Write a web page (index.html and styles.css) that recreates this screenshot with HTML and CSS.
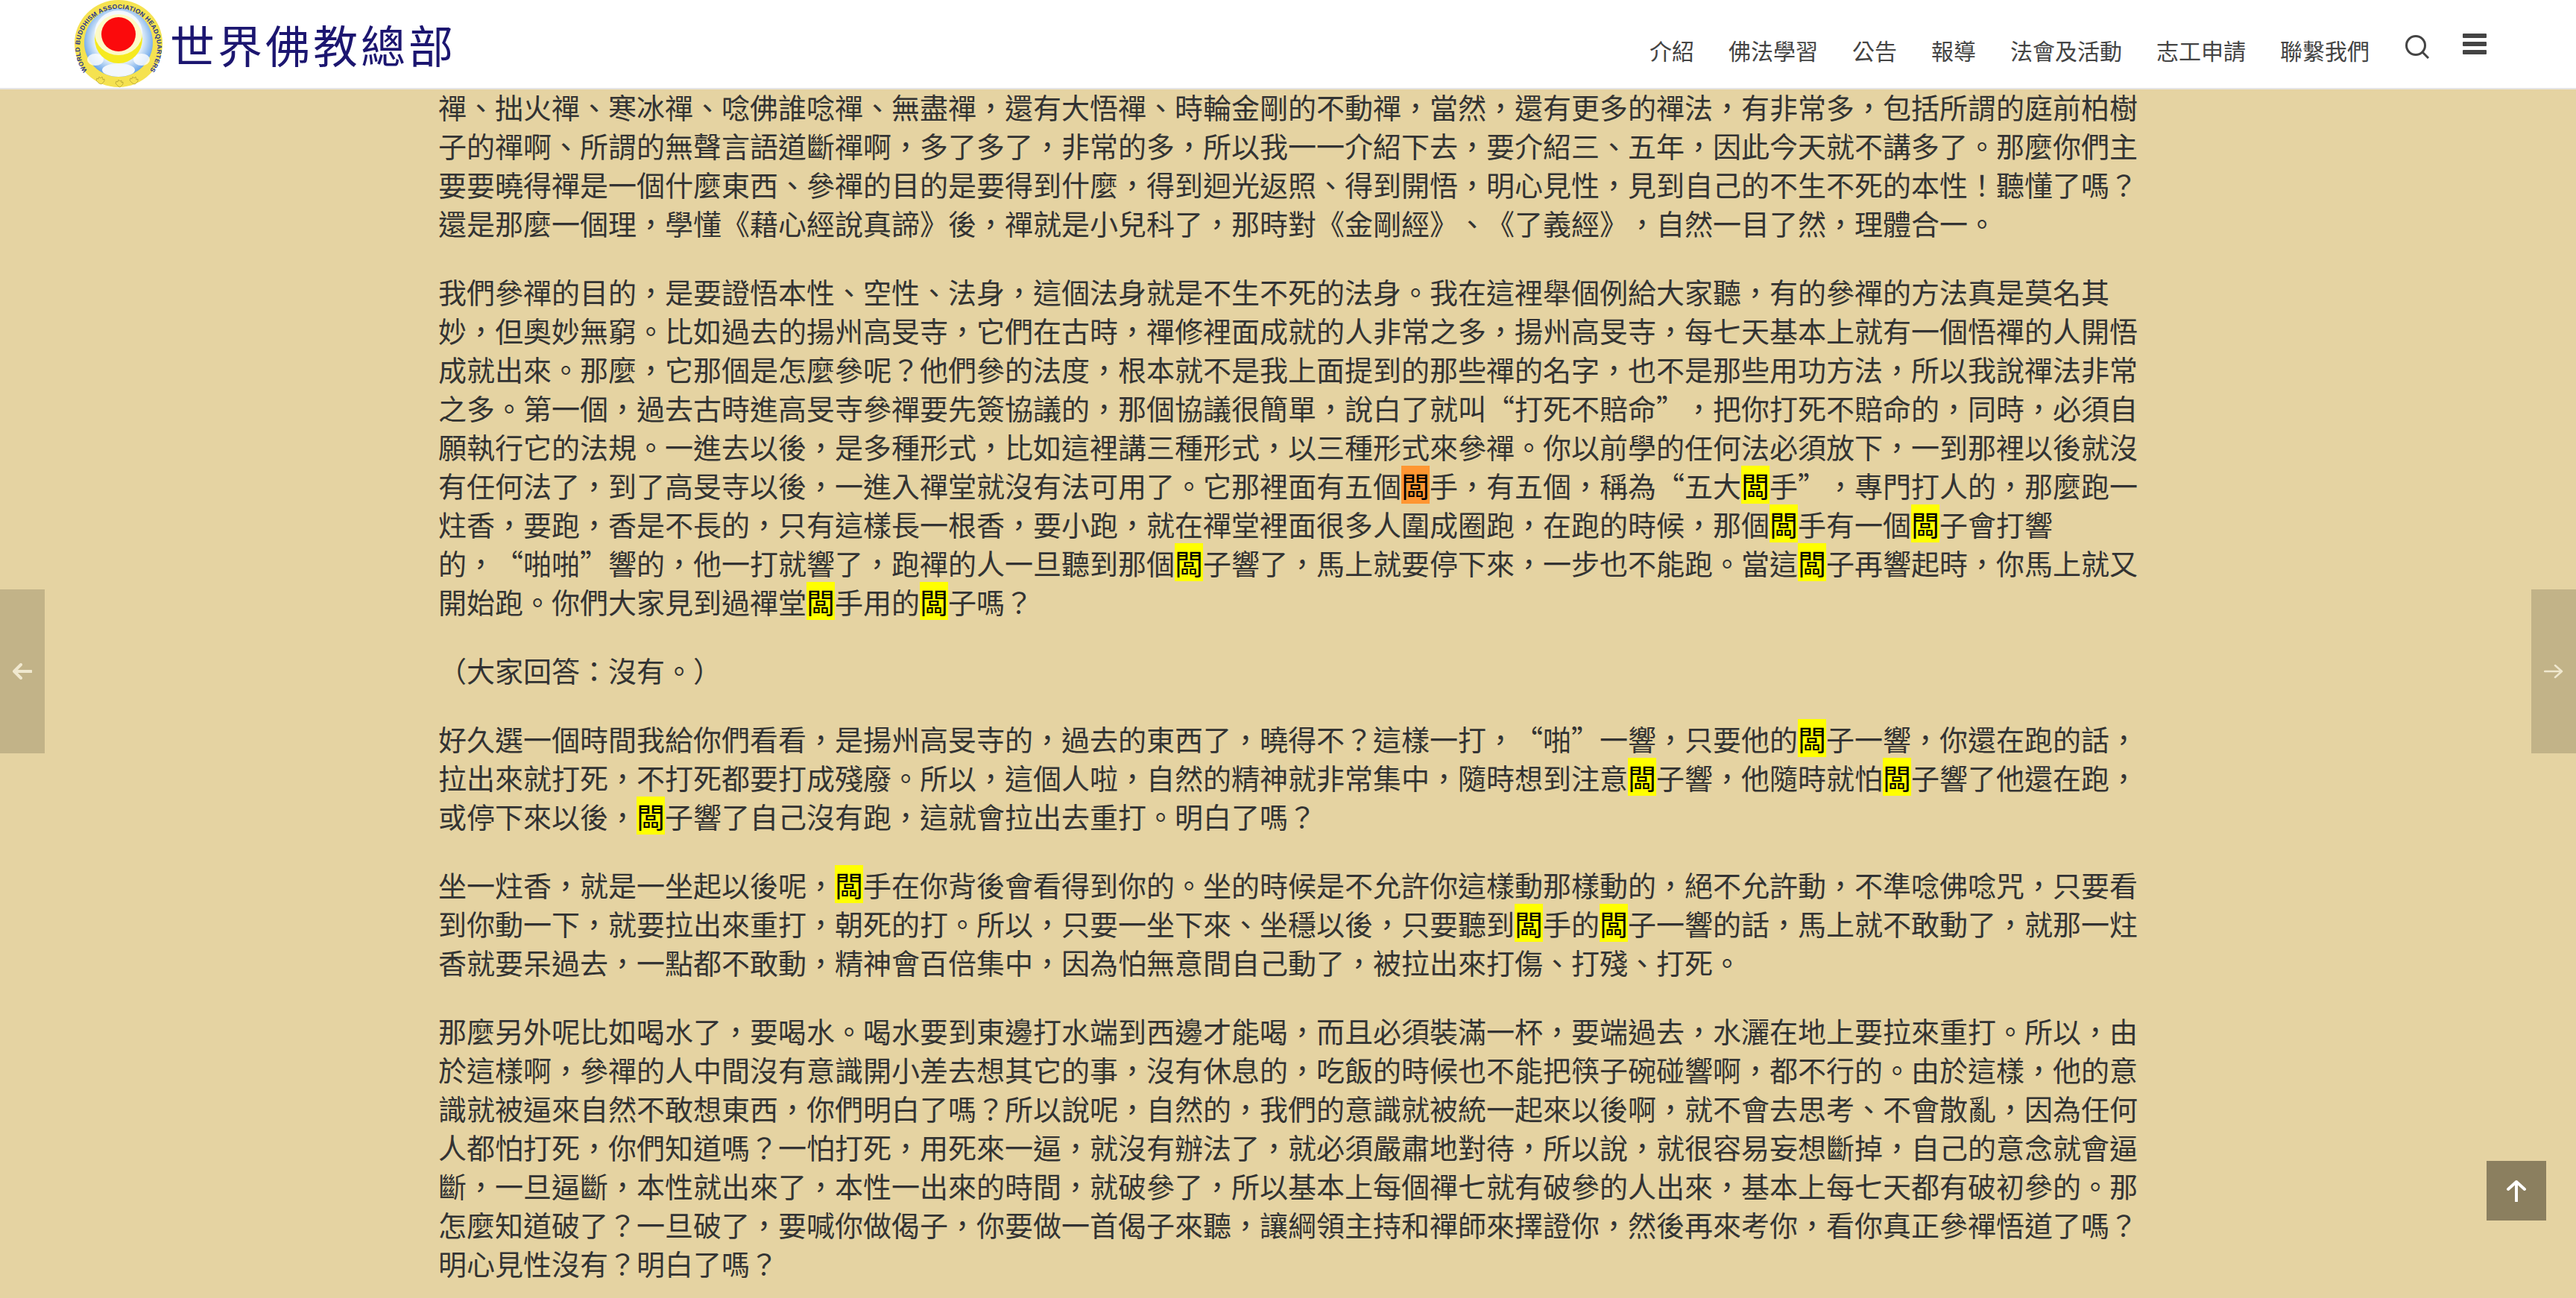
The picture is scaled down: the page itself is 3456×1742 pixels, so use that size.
FILE: index.html
```html
<!DOCTYPE html>
<html lang="zh-Hant">
<head>
    <meta charset="UTF-8">
    <meta name="viewport" content="width=device-width, initial-scale=1.0">
    <title>世界佛教總部</title>
    <link rel="stylesheet" href="styles.css">
</head>
<body>
    <header class="site-header">
        <a href="#" class="brand">
            <svg class="brand-logo" viewBox="0 0 118 118" width="118" height="118">
                <defs>
                    <radialGradient id="skyGlow" cx="50%" cy="45%" r="55%">
                        <stop offset="0%" stop-color="#ffffff"/>
                        <stop offset="62%" stop-color="#e8f2fb"/>
                        <stop offset="100%" stop-color="#5f9fe8"/>
                    </radialGradient>
                    <path id="ringPath" d="M19 97 A52 52 0 1 1 99 97"/>
                </defs>
                <ellipse cx="59" cy="58.5" rx="59" ry="58.5" fill="#f5e250"/>
                <ellipse cx="59" cy="57" rx="46" ry="46" fill="url(#skyGlow)"/>
                <ellipse cx="28" cy="80" rx="11" ry="8" fill="#ffffff" opacity="0.8"/>
                <ellipse cx="90" cy="80" rx="11" ry="8" fill="#ffffff" opacity="0.8"/>
                <ellipse cx="59" cy="94" rx="22" ry="9" fill="#f2f7fd"/>
                <ellipse cx="59" cy="52" rx="32" ry="33" fill="#f6ea1f"/>
                <ellipse cx="59" cy="44" rx="32" ry="30" fill="#ffffff" opacity="0.75"/>
                <ellipse cx="59" cy="46" rx="23" ry="23" fill="#fb0a0c"/>
                <text class="ring-text"><textPath href="#ringPath" startOffset="50%" text-anchor="middle">WORLD BUDDHISM ASSOCIATION HEADQUARTERS</textPath></text>
                <g class="ring-leaves">
                    <path d="M33 112l-4-4 1-3 2 1 1-3 2 2 2-2 1 4 2-1 0 3-4 4z"/>
                    <path d="M59 116l-4-4 1-3 2 1 1-3 2 2 2-1 0 3 2-1 0 3-4 4z"/>
                    <path d="M78 112l-4-4 1-3 2 1 1-3 2 2 2-2 1 4 2-1 0 3-4 4z"/>
                </g>
            </svg>
            <span class="brand-name">世界佛教總部</span>
        </a>
        <nav class="main-nav">
            <a href="#">介紹</a>
            <a href="#">佛法學習</a>
            <a href="#">公告</a>
            <a href="#">報導</a>
            <a href="#">法會及活動</a>
            <a href="#">志工申請</a>
            <a href="#">聯繫我們</a>
        </nav>
        <svg class="search-icon" viewBox="0 0 34 32" width="34" height="32">
            <circle cx="15" cy="14" r="12.5"/>
            <path d="M24 23l8 8"/>
        </svg>
        <div class="menu-icon"><span></span><span></span><span></span></div>
    </header>

    <main class="article">
        <p>禪、拙火禪、寒冰禪、唸佛誰唸禪、無盡禪，還有大悟禪、時輪金剛的不動禪，當然，還有更多的禪法，有非常多，包括所謂的庭前柏樹子的禪啊、所謂的無聲言語道斷禪啊，多了多了，非常的多，所以我一一介紹下去，要介紹三、五年，因此今天就不講多了。那麼你們主要要曉得禪是一個什麼東西、參禪的目的是要得到什麼，得到迴光返照、得到開悟，明心見性，見到自己的不生不死的本性！聽懂了嗎？還是那麼一個理，學懂《藉心經說真諦》後，禪就是小兒科了，那時對《金剛經》、《了義經》，自然一目了然，理體合一。</p>
        <p>我們參禪的目的，是要證悟本性、空性、法身，這個法身就是不生不死的法身。我在這裡舉個例給大家聽，有的參禪的方法真是莫名其妙，但奧妙無窮。比如過去的揚州高旻寺，它們在古時，禪修裡面成就的人非常之多，揚州高旻寺，每七天基本上就有一個悟禪的人開悟成就出來。那麼，它那個是怎麼參呢？他們參的法度，根本就不是我上面提到的那些禪的名字，也不是那些用功方法，所以我說禪法非常之多。第一個，過去古時進高旻寺參禪要先簽協議的，那個協議很簡單，說白了就叫“打死不賠命”，把你打死不賠命的，同時，必須自願執行它的法規。一進去以後，是多種形式，比如這裡講三種形式，以三種形式來參禪。你以前學的任何法必須放下，一到那裡以後就沒有任何法了，到了高旻寺以後，一進入禪堂就沒有法可用了。它那裡面有五個<mark class="current">闆</mark>手，有五個，稱為“五大<mark>闆</mark>手”，專門打人的，那麼跑一炷香，要跑，香是不長的，只有這樣長一根香，要小跑，就在禪堂裡面很多人圍成圈跑，在跑的時候，那個<mark>闆</mark>手有一個<mark>闆</mark>子會打響<br>的，“啪啪”響的，他一打就響了，跑禪的人一旦聽到那個<mark>闆</mark>子響了，馬上就要停下來，一步也不能跑。當這<mark>闆</mark>子再響起時，你馬上就又開始跑。你們大家見到過禪堂<mark>闆</mark>手用的<mark>闆</mark>子嗎？</p>
        <p>（大家回答：沒有。）</p>
        <p>好久選一個時間我給你們看看，是揚州高旻寺的，過去的東西了，曉得不？這樣一打，“啪”一響，只要他的<mark>闆</mark>子一響，你還在跑的話，拉出來就打死，不打死都要打成殘廢。所以，這個人啦，自然的精神就非常集中，隨時想到注意<mark>闆</mark>子響，他隨時就怕<mark>闆</mark>子響了他還在跑，或停下來以後，<mark>闆</mark>子響了自己沒有跑，這就會拉出去重打。明白了嗎？</p>
        <p>坐一炷香，就是一坐起以後呢，<mark>闆</mark>手在你背後會看得到你的。坐的時候是不允許你這樣動那樣動的，絕不允許動，不準唸佛唸咒，只要看到你動一下，就要拉出來重打，朝死的打。所以，只要一坐下來、坐穩以後，只要聽到<mark>闆</mark>手的<mark>闆</mark>子一響的話，馬上就不敢動了，就那一炷香就要呆過去，一點都不敢動，精神會百倍集中，因為怕無意間自己動了，被拉出來打傷、打殘、打死。</p>
        <p>那麼另外呢比如喝水了，要喝水。喝水要到東邊打水端到西邊才能喝，而且必須裝滿一杯，要端過去，水灑在地上要拉來重打。所以，由於這樣啊，參禪的人中間沒有意識開小差去想其它的事，沒有休息的，吃飯的時候也不能把筷子碗碰響啊，都不行的。由於這樣，他的意識就被逼來自然不敢想東西，你們明白了嗎？所以說呢，自然的，我們的意識就被統一起來以後啊，就不會去思考、不會散亂，因為任何人都怕打死，你們知道嗎？一怕打死，用死來一逼，就沒有辦法了，就必須嚴肅地對待，所以說，就很容易妄想斷掉，自己的意念就會逼斷，一旦逼斷，本性就出來了，本性一出來的時間，就破參了，所以基本上每個禪七就有破參的人出來，基本上每七天都有破初參的。那怎麼知道破了？一旦破了，要喊你做偈子，你要做一首偈子來聽，讓綱領主持和禪師來擇證你，然後再來考你，看你真正參禪悟道了嗎？明心見性沒有？明白了嗎？</p>
    </main>

    <a href="#" class="side-tab side-tab-prev">
        <svg viewBox="0 0 26 22" width="26" height="22"><path d="M25 11H3M11 2l-9 9 9 9"/></svg>
    </a>
    <a href="#" class="side-tab side-tab-next">
        <svg viewBox="0 0 26 22" width="26" height="22"><path d="M1 11h23M15 3l9 8-9 8"/></svg>
    </a>
    <a href="#" class="back-top">
        <svg viewBox="0 0 26 30" width="26" height="30"><path d="M13 29V3M2 13l11-10 11 10"/></svg>
    </a>
</body>
</html>
```

FILE: styles.css
```css
html, body {
    height: 100%;
}
body {
    margin: 0;
    overflow: hidden;
    font-family: "Noto Sans CJK TC", "Liberation Sans", sans-serif;
    background-color: #e5d3a2;
    color: #333333;
}
a {
    text-decoration: none;
    color: inherit;
}

/* Header */
.site-header {
    display: flex;
    align-items: center;
    box-sizing: border-box;
    height: 120px;
    padding: 0 120px 0 100px;
    background-color: #ffffff;
    border-bottom: 2px solid #e5e5e5;
}
.brand {
    display: flex;
    align-items: center;
    gap: 10px;
}
.brand-logo {
    display: block;
}
.ring-text {
    font-family: "Liberation Sans", sans-serif;
    font-size: 8.6px;
    font-weight: bold;
    fill: #27348b;
    letter-spacing: 0.3px;
}
.ring-leaves path {
    fill: #f5e250;
    stroke: #a08f2c;
    stroke-width: 0.6;
}
.brand-name {
    font-size: 60px;
    line-height: 1;
    letter-spacing: 4px;
    color: #1c1670;
}
.main-nav {
    display: flex;
    gap: 46px;
    margin-left: auto;
    padding-top: 16px;
    font-size: 30px;
    line-height: 40px;
    color: #444444;
}
.search-icon {
    margin: 8px 0 0 47px;
    fill: none;
    stroke: #444444;
    stroke-width: 3;
}
.menu-icon {
    display: flex;
    flex-direction: column;
    gap: 5px;
    margin-left: 44px;
    width: 32px;
}
.menu-icon span {
    height: 6px;
    border-radius: 1px;
    background-color: #444444;
}

/* Article */
.article {
    width: 2282px;
    margin: -3px 0 0 588px;
    font-size: 38px;
    line-height: 52px;
    text-spacing-trim: space-all;
}
.article p {
    margin: 0 0 40px;
}
mark {
    display: inline-block;
    width: 38px;
    height: 51px;
    line-height: 51px;
    background-color: #ffff00;
    color: #000000;
}
mark.current {
    background-color: #ff9632;
}

/* Fixed controls */
.side-tab {
    position: fixed;
    top: 791px;
    display: flex;
    align-items: center;
    justify-content: center;
    width: 60px;
    height: 220px;
    background-color: #c2b388;
}
.side-tab svg {
    fill: none;
    stroke: #f0e8cf;
    stroke-linecap: round;
    stroke-linejoin: round;
}
.side-tab-prev {
    left: 0;
}
.side-tab-prev svg {
    stroke-width: 4;
}
.side-tab-next {
    right: 0;
}
.side-tab-next svg {
    stroke-width: 2.5;
}
.back-top {
    position: fixed;
    top: 1558px;
    left: 3336px;
    display: flex;
    align-items: center;
    justify-content: center;
    width: 80px;
    height: 80px;
    background-color: #8b7f5f;
}
.back-top svg {
    fill: none;
    stroke: #ffffff;
    stroke-width: 4;
    stroke-linecap: round;
    stroke-linejoin: round;
}
```
